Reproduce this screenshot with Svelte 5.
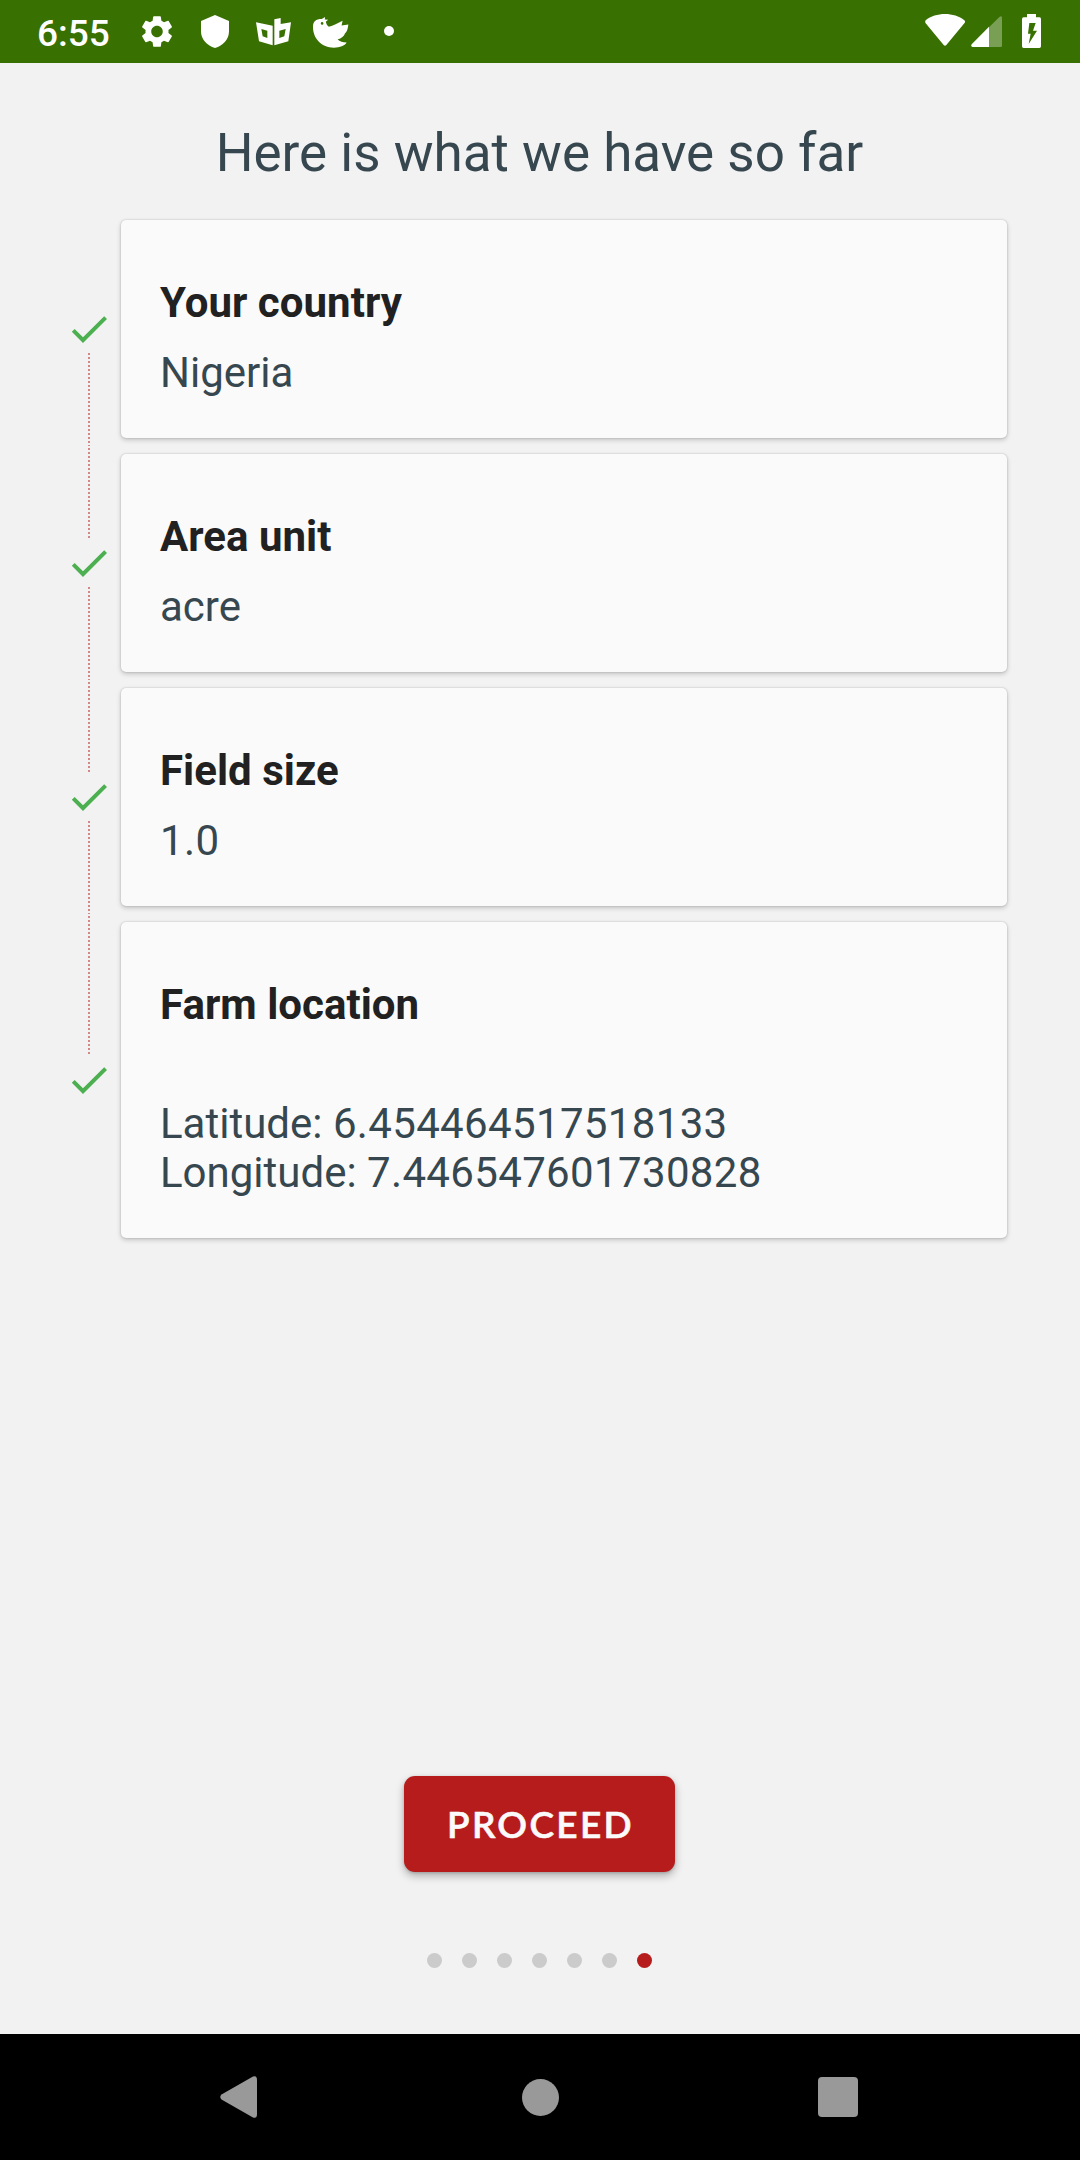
<script>
  const steps = [
    { title: 'Your country', lines: [{ text: 'Nigeria' }] },
    { title: 'Area unit', lines: [{ text: 'acre' }] },
    { title: 'Field size', lines: [{ number: '1.0' }] },
    {
      title: 'Farm location',
      lines: [
        {},
        { text: 'Latitude: ', number: '6.454464517518133' },
        { text: 'Longitude: ', number: '7.446547601730828' },
      ],
    },
  ];
  const pages = 7;
  const current = 6;
</script>

<div class="screen">
  <header class="status">
    <div class="left">
      <span class="clock">6:55</span>
      <svg class="gear" viewBox="2 2 20 20"><path d="M19.14 12.94c.04-.3.06-.61.06-.94 0-.32-.02-.64-.07-.94l2.03-1.58c.18-.14.23-.41.12-.61l-1.92-3.32c-.12-.22-.37-.29-.59-.22l-2.39.96c-.5-.38-1.03-.7-1.62-.94l-.36-2.54c-.04-.24-.24-.41-.48-.41h-3.84c-.24 0-.43.17-.47.41l-.36 2.54c-.59.24-1.13.57-1.62.94l-2.39-.96c-.22-.08-.47 0-.59.22L2.74 8.87c-.12.21-.08.47.12.61l2.03 1.58c-.05.3-.09.63-.09.94s.02.64.07.94l-2.03 1.58c-.18.14-.23.41-.12.61l1.92 3.32c.12.22.37.29.59.22l2.39-.96c.5.38 1.03.7 1.62.94l.36 2.54c.05.24.24.41.48.41h3.84c.24 0 .44-.17.47-.41l.36-2.54c.59-.24 1.13-.56 1.62-.94l2.39.96c.22.08.47 0 .59-.22l1.92-3.32c.12-.22.07-.47-.12-.61l-2.01-1.58zM12 15.6c-1.98 0-3.6-1.62-3.6-3.6s1.62-3.6 3.6-3.6 3.6 1.62 3.6 3.6-1.62 3.6-3.6 3.6z" /></svg>
      <svg class="shield" viewBox="0 0 84 99"><path d="M42 0 84 18V49C84 73 66 93 42 99 18 93 0 73 0 49V18Z" /></svg>
      <svg class="masks" viewBox="0 0 105 84"><path fill-rule="evenodd" d="M0 13 50 23V82L9 70ZM16 33 20 55 34 60V38ZM55 4 74 0V18L105 13 97 70 55 82ZM70 38V60L85 55 89 33Z" /></svg>
      <svg class="bird" viewBox="0 0 107 92"><path fill-rule="evenodd" d="M0 28C0 14 8 6 26 6L36 0 35 7 45 8 38 14C40 20 42 26 47 29 60 26 74 18 88 11L85 25 105 22C104 32 102 42 95 49 92 57 85 63 73 67 80 73 88 76 100 76 94 86 80 91 62 91 24 91-1 62 0 28ZM23 19A4 4 0 1 0 31 19 4 4 0 1 0 23 19Z" /></svg>
      <i class="more"></i>
    </div>
    <div class="right">
      <svg class="wifi" viewBox="0 0 120 96"><path d="M2 19C32-6 88-6 118 19 121 22 121 25 118 28L64 93Q60 97 56 93L2 28Q-1 23 2 19Z" /></svg>
      <svg class="signal" viewBox="0 0 93 93"><path opacity=".33" d="M54 34 86 2Q93-2 93 6V89Q93 93 89 93H54Z" /><path d="M54 32V93H5Q-2 92 2 85Z" /></svg>
      <svg class="battery" viewBox="0 0 57 102"><path fill-rule="evenodd" d="M15 0H42V10H53Q57 10 57 15V97Q57 102 52 102H5Q0 102 0 97V15Q0 10 5 10H15ZM22 27 18 59H26L20 90 45 50H33L41 27Z" /></svg>
    </div>
  </header>

  <main>
    <h1>Here is what we have so far</h1>

    <ol class="timeline">
      {#each steps as step}
        <li>
          <div class="rail">
            <span class="line above"></span>
            <svg class="check" viewBox="0 0 24 24"><path d="M9 16.17 4.83 12l-1.42 1.41L9 19 21 7l-1.41-1.41z" /></svg>
            <span class="line below"></span>
          </div>
          <section class="card">
            <h2>{step.title}</h2>
            {#each step.lines as line}
              <p>{line.text ?? ''}<span class="number">{line.number ?? ''}</span></p>
            {/each}
          </section>
        </li>
      {/each}
    </ol>

    <button class="proceed">PROCEED</button>

    <div class="pager">
      {#each Array(pages) as _, i}
        <i class:active={i === current}></i>
      {/each}
    </div>
  </main>

  <nav>
    <svg class="back" viewBox="0 0 37 42"><path d="M33 .5Q37-1 37 4V38Q37 43 33 41.500L1.500 23.500Q-1 21 1.500 18.500Z" /></svg>
    <span class="home"></span>
    <span class="recents"></span>
  </nav>
</div>

<style>
  :global(body) {
    margin: 0;
  }
  .screen {
    width: 1080px;
    height: 2160px;
    display: flex;
    flex-direction: column;
    background: #f2f2f2;
    font-family: Roboto, sans-serif;
    color: #37474f;
    overflow: hidden;
  }
  svg {
    display: block;
    fill: currentColor;
    flex: none;
  }
  .status {
    height: 63px;
    flex: none;
    box-sizing: border-box;
    padding: 0 39px 0 37px;
    display: flex;
    justify-content: space-between;
    background: #387002;
    color: #fff;
  }
  .left,
  .right {
    display: flex;
    align-items: flex-start;
  }
  .clock {
    width: 104px;
    padding-top: 12px;
    font-size: 37px;
    line-height: 44px;
    font-weight: 500;
  }
  .gear {
    width: 32px;
    height: 33px;
    margin-top: 15px;
  }
  .shield {
    width: 28px;
    height: 33px;
    margin: 15px 0 0 28px;
  }
  .masks {
    width: 35px;
    height: 28px;
    margin: 18px 0 0 27px;
  }
  .bird {
    width: 36px;
    height: 31px;
    margin: 17px 0 0 22px;
  }
  .more {
    width: 10px;
    height: 10px;
    margin: 26px 0 0 35px;
    border-radius: 50%;
    background: #fff;
  }
  .wifi {
    width: 40px;
    height: 32px;
    margin-top: 14px;
  }
  .signal {
    width: 31px;
    height: 31px;
    margin: 16px 0 0 6.500px;
  }
  .battery {
    width: 19px;
    height: 34px;
    margin: 14px 0 0 20px;
  }
  main {
    flex: 1;
    display: flex;
    flex-direction: column;
    align-items: center;
  }
  h1 {
    margin: 59px 1px 0 0;
    height: 90px;
    font-size: 53px;
    line-height: 62px;
    font-weight: 400;
  }
  .timeline {
    align-self: stretch;
    margin: 0;
    padding: 0 73px 0 65px;
    list-style: none;
  }
  li {
    display: flex;
  }
  .rail {
    width: 48px;
    margin-right: 8px;
    display: flex;
    flex-direction: column;
    align-items: center;
  }
  .check {
    width: 48px;
    height: 48px;
    color: #4caf50;
  }
  .line {
    flex: 1;
    width: 2px;
  }
  .above {
    background: repeating-linear-gradient(#0000 0 2px, #d48787 2px 4px);
  }
  .below {
    background: repeating-linear-gradient(#d48787 0 2px, #0000 2px 4px);
  }
  li:first-child .above,
  li:last-child .below {
    visibility: hidden;
  }
  .card {
    flex: 1;
    margin: 8px 0;
    padding: 58px 40px 41px 39px;
    border-radius: 5px;
    background: #fafafa;
    box-shadow:
      0 0 2px rgba(0, 0, 0, 0.2),
      0 2px 5px rgba(0, 0, 0, 0.2);
    font-size: 42px;
    line-height: 49px;
  }
  h2 {
    margin: 0 0 21px;
    font-size: 42px;
    line-height: 49px;
    font-weight: 700;
    letter-spacing: 0.030px;
    color: #212121;
  }
  p {
    margin: 0;
    height: 49px;
  }
  .number {
    letter-spacing: 0.350px;
  }
  .proceed {
    width: 271px;
    height: 96px;
    margin: auto 1px 81px 0;
    padding: 0 0 1px 2px;
    border: 0;
    border-radius: 11px;
    background: #b71c1c;
    color: #fafafa;
    font-family: Lato, sans-serif;
    font-size: 37px;
    font-weight: 600;
    letter-spacing: 2.300px;
    -webkit-text-stroke: 0.600px #fafafa;
    box-shadow:
      0 4px 8px rgba(0, 0, 0, 0.28),
      0 1px 3px rgba(0, 0, 0, 0.15);
  }
  .pager {
    display: flex;
    gap: 20px;
    margin: 0 1px 66px 0;
  }
  .pager i {
    width: 15px;
    height: 15px;
    border-radius: 50%;
    background: #cbcbcb;
  }
  .pager .active {
    background: #b71c1c;
  }
  nav {
    height: 126px;
    flex: none;
    box-sizing: border-box;
    padding: 0 222px 0 220px;
    display: flex;
    align-items: center;
    justify-content: space-between;
    background: #000;
    color: #999;
  }
  .home {
    width: 37px;
    height: 37px;
    margin-left: 6px;
    border-radius: 50%;
    background: #999;
  }
  .recents {
    width: 40px;
    height: 40px;
    border-radius: 4px;
    background: #999;
  }
  .back {
    width: 37px;
    height: 42px;
  }
</style>
